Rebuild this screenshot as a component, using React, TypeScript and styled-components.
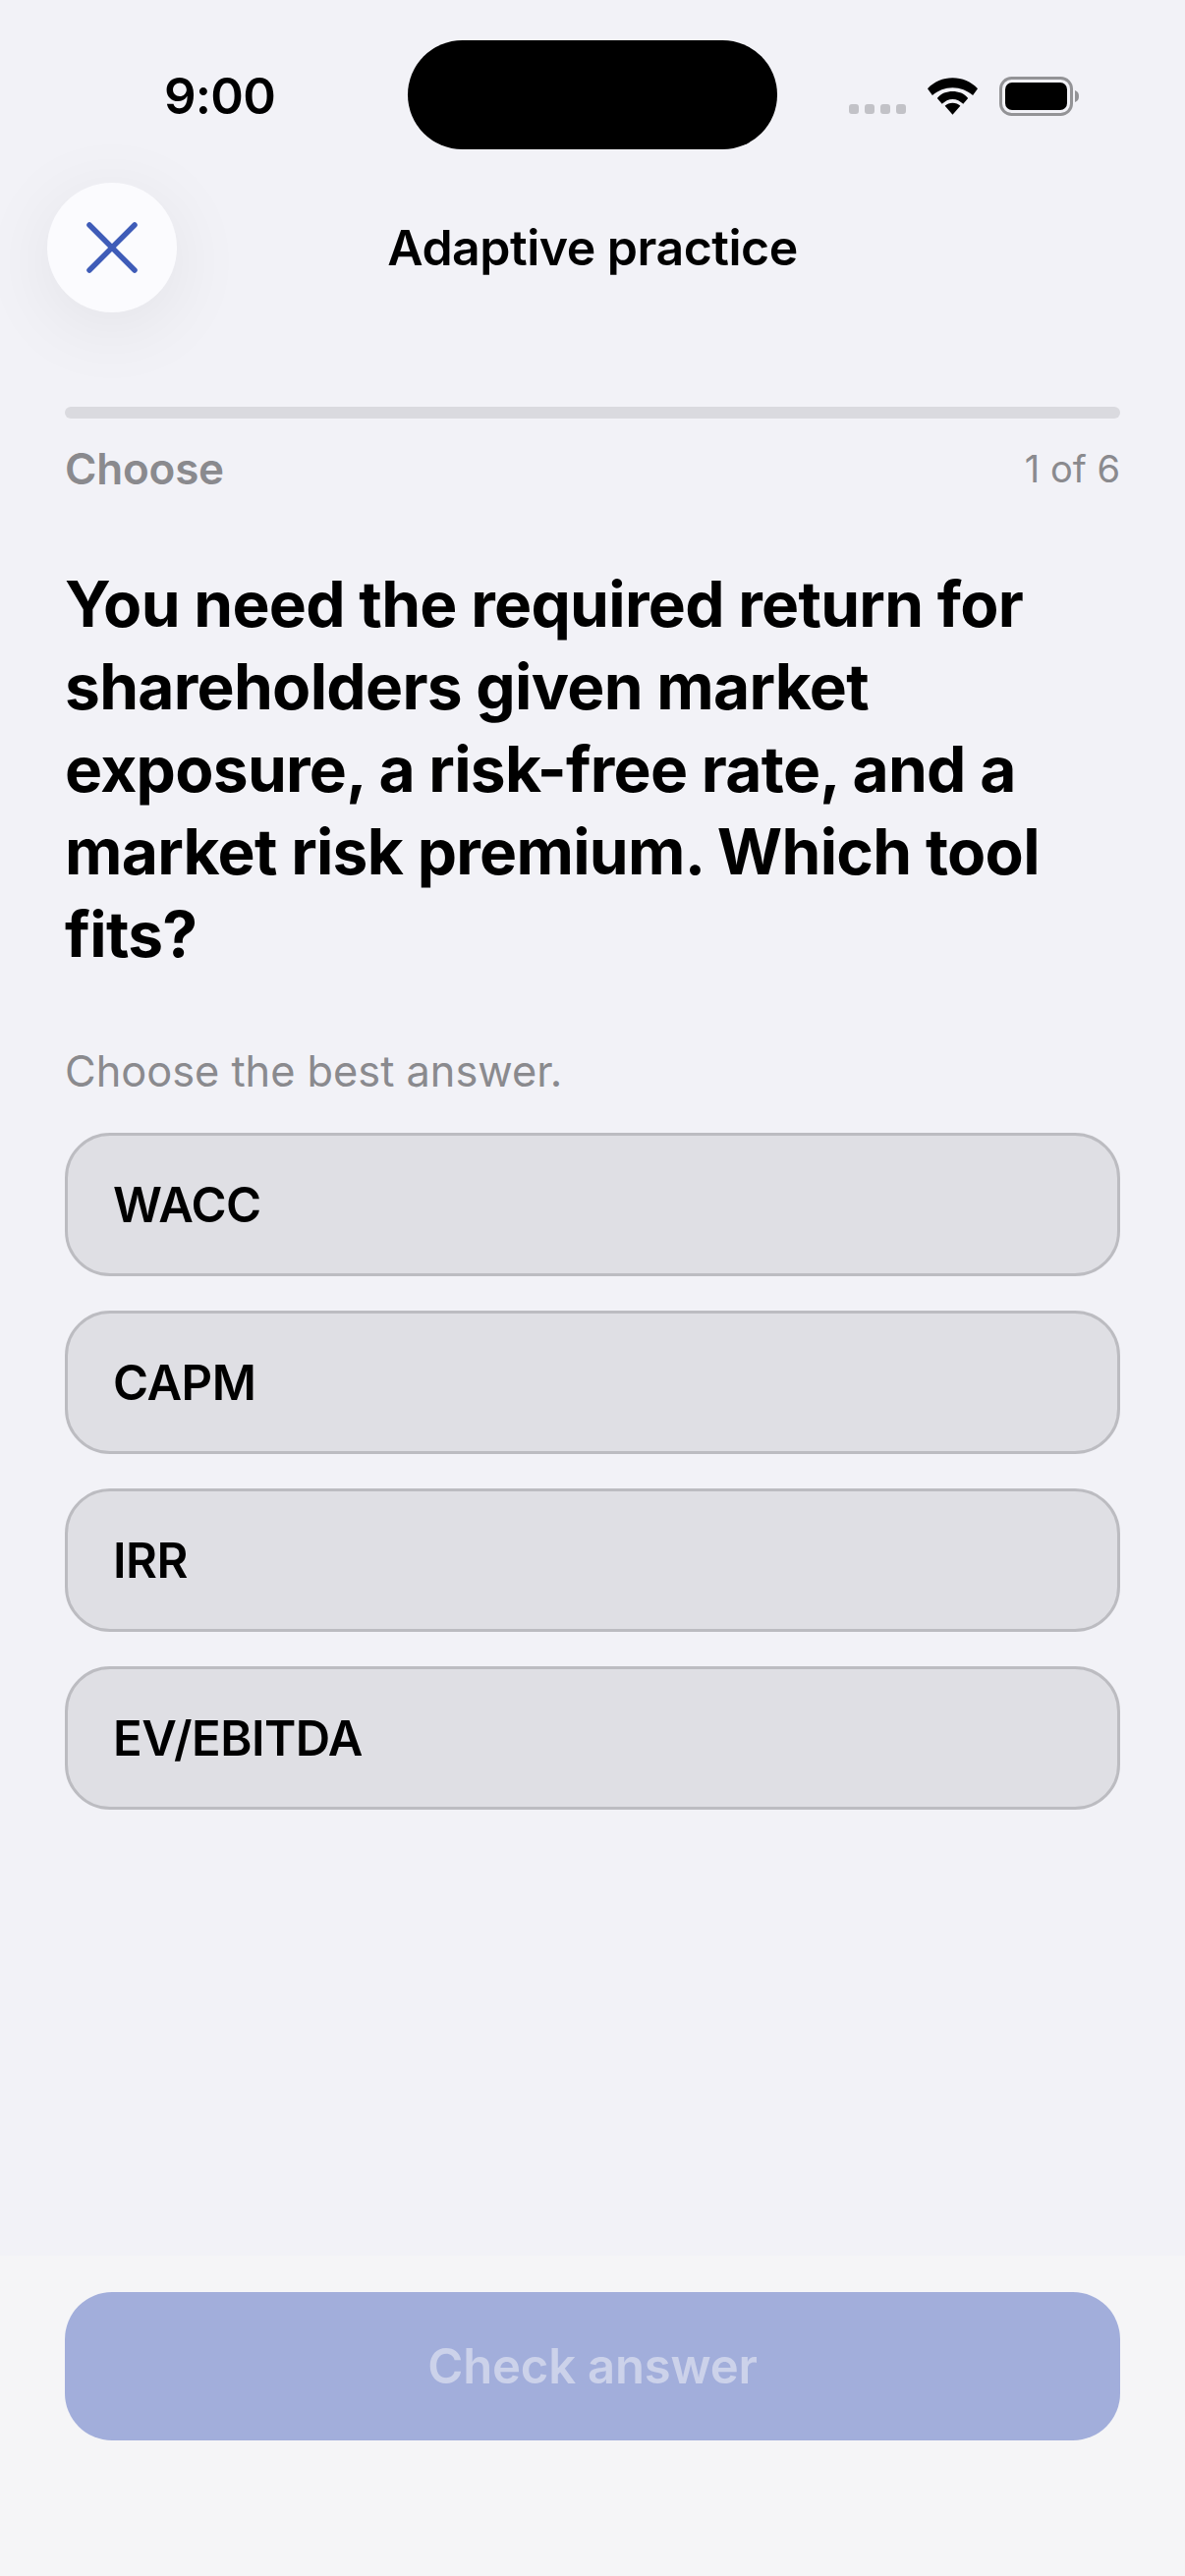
import React from "react";
import styled, { createGlobalStyle } from "styled-components";

const Global = createGlobalStyle`
  html, body { margin: 0; padding: 0; background: #f2f2f7; }
  * { box-sizing: border-box; }
  body { font-family: Inter, "Liberation Sans", sans-serif; -webkit-font-smoothing: antialiased; }
`;

const Page = styled.div`
  width: 1206px;
  height: 2622px;
  background: #f2f2f7;
  display: flex;
  flex-direction: column;
  overflow: hidden;
`;

const StatusBar = styled.div`
  display: grid;
  grid-template-columns: 415px 376px 1fr;
  align-items: start;
  padding-top: 41px;
  height: 152px;
`;

const Time = styled.div`
  justify-self: start;
  margin: 31px 0 0 167px;
  font-size: 51px;
  line-height: 52px;
  font-weight: 600;
  letter-spacing: -0.8px;
  color: #000;
`;

const Island = styled.div`
  height: 111px;
  border-radius: 56px;
  background: #000;
`;

const StatusIcons = styled.div`
  display: flex;
  align-items: flex-start;
  padding: 37px 0 0 73px;
`;

const Dots = styled.div`
  display: flex;
  gap: 6px;
  margin-top: 28px;
`;

const Dot = styled.span`
  width: 10px;
  height: 10px;
  border-radius: 3px;
  background: #c2c2c7;
`;

const Wifi = styled.svg`
  width: 51px;
  height: 38px;
  margin: 1px 0 0 22px;
`;

const Battery = styled.svg`
  width: 82px;
  height: 40px;
  margin-left: 22px;
`;

const Header = styled.header`
  display: grid;
  grid-template-columns: 132px 1fr 132px;
  align-items: center;
  margin-top: 34px;
  padding: 0 48px;
`;

const CloseButton = styled.button`
  width: 132px;
  height: 132px;
  border: none;
  padding: 0;
  border-radius: 50%;
  background: #fbfbfe;
  box-shadow: 0 14px 80px rgba(0, 0, 0, 0.07);
  display: flex;
  align-items: center;
  justify-content: center;
`;

const Title = styled.h1`
  margin: 0;
  text-align: center;
  font-size: 50px;
  line-height: 62px;
  font-weight: 600;
  letter-spacing: -0.5px;
  color: #000;
`;

const Content = styled.main`
  padding: 96px 66px 0;
  display: flex;
  flex-direction: column;
`;

const Track = styled.div`
  height: 12px;
  border-radius: 6px;
  background: #dadadf;
`;

const Meta = styled.div`
  display: flex;
  justify-content: space-between;
  align-items: center;
  margin-top: 24px;
  height: 54px;
`;

const Step = styled.span`
  font-size: 44px;
  font-weight: 600;
  letter-spacing: -0.2px;
  color: #8a8a8e;
`;

const Count = styled.span`
  font-size: 38px;
  font-weight: 400;
  color: #8a8a8e;
`;

const Question = styled.h2`
  margin: 69px 0 0;
  font-size: 64px;
  line-height: 84px;
  font-weight: 700;
  letter-spacing: -0.7px;
  color: #000;
`;

const Hint = styled.p`
  margin: 70px 0 0;
  font-size: 43.3px;
  line-height: 54px;
  font-weight: 400;
  color: #8a8a8e;
`;

const Options = styled.div`
  display: flex;
  flex-direction: column;
  gap: 35px;
  margin-top: 36px;
`;

const Option = styled.button`
  height: 146px;
  padding: 0 46px;
  border: 3px solid #bcbcc1;
  border-radius: 46px;
  background: #dfdfe4;
  text-align: left;
  font-family: inherit;
  font-size: 49px;
  font-weight: 600;
  letter-spacing: -0.5px;
  color: #000;
`;

const Footer = styled.footer`
  margin-top: auto;
  padding: 37px 66px 138px;
  background: #f5f5f7;
`;

const Submit = styled.button`
  width: 100%;
  height: 151px;
  border: none;
  border-radius: 48px;
  background: #a2aedb;
  font-family: inherit;
  font-size: 49px;
  font-weight: 600;
  letter-spacing: -0.2px;
  color: #ccd2ea;
`;

const options = ["WACC", "CAPM", "IRR", "EV/EBITDA"];

export default function App() {
  return (
    <Page>
      <Global />
      <StatusBar>
        <Time>9:00</Time>
        <Island />
        <StatusIcons>
          <Dots>
            <Dot />
            <Dot />
            <Dot />
            <Dot />
          </Dots>
          <Wifi viewBox="0 0 52 38">
            <path d="M26 0C16 0 7 4 0 11l5 7c6-5 13-8 21-8s15 3 21 8l5-7C45 4 36 0 26 0z" fill="#000" />
            <path d="M26 14c-6 0-12 2-16 7l5 6c3-3 7-5 11-5s8 2 11 5l5-6c-4-5-10-7-16-7z" fill="#000" />
            <path d="M26 26c-3 0-6 1-8 3l8 9 8-9c-2-2-5-3-8-3z" fill="#000" />
          </Wifi>
          <Battery viewBox="0 0 82 40">
            <rect x="1.5" y="1.5" width="72" height="37" rx="11" fill="none" stroke="#939396" strokeWidth="3" />
            <rect x="6" y="6" width="63" height="28" rx="7" fill="#000" />
            <path d="M77 14c3 1 4 3 4 6s-1 5-4 6z" fill="#939396" />
          </Battery>
        </StatusIcons>
      </StatusBar>
      <Header>
        <CloseButton aria-label="Close">
          <svg width="52" height="52" viewBox="0 0 52 52" fill="none" stroke="#3f5cb8" strokeWidth="5.5" strokeLinecap="round">
            <path d="M3 3L49 49" />
            <path d="M49 3L3 49" />
          </svg>
        </CloseButton>
        <Title>Adaptive practice</Title>
      </Header>
      <Content>
        <Track />
        <Meta>
          <Step>Choose</Step>
          <Count>1 of 6</Count>
        </Meta>
        <Question>You need the required return for shareholders given market exposure, a risk-free rate, and a market risk premium. Which tool fits?</Question>
        <Hint>Choose the best answer.</Hint>
        <Options>
          {options.map((o) => (
            <Option key={o}>{o}</Option>
          ))}
        </Options>
      </Content>
      <Footer>
        <Submit disabled>Check answer</Submit>
      </Footer>
    </Page>
  );
}
